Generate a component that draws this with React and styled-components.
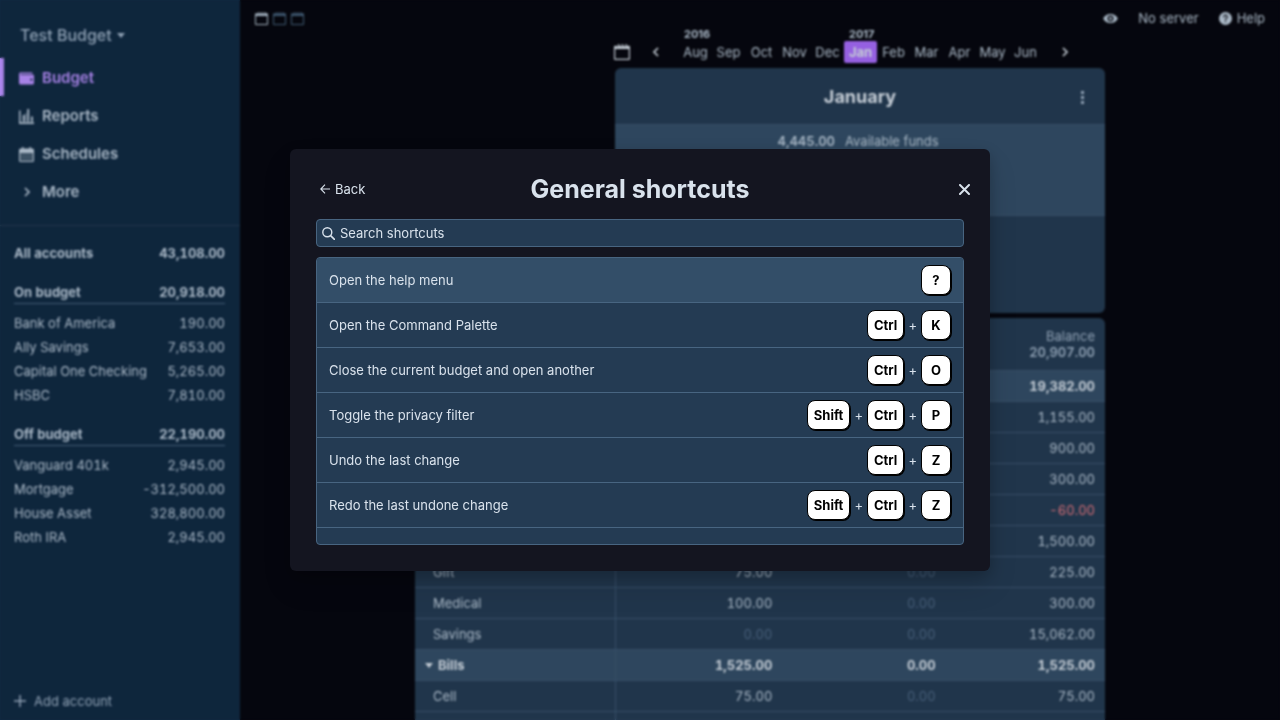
import React from "react";
import styled, { createGlobalStyle, css } from "styled-components";

const color = {
  page: "#06070f",
  sidebar: "#102a43",
  table: "#243b53",
  band: "#334e68",
  line: "#3b5672",
  border: "#486581",
  text: "#d9e2ec",
  soft: "#bcccdc",
  muted: "#9fb3c8",
  faint: "#4f6987",
  purple: "#b990ff",
  chip: "#a66bfa",
  red: "#ee7a84",
  modal: "#141520",
};

const GlobalStyle = createGlobalStyle`
  * { box-sizing: border-box; }
  body {
    margin: 0;
    background: ${color.page};
    color: ${color.text};
    font-family: Inter, "Liberation Sans", sans-serif;
    font-size: 13px;
    line-height: 16px;
  }
  button, input { font: inherit; color: inherit; }
`;

const PlainButton = styled.button`
  display: flex;
  align-items: center;
  gap: ${(p) => p.$gap || 0}px;
  padding: 0;
  border: 0;
  background: none;
  cursor: pointer;
`;

const Svg = styled.svg`
  display: block;
  flex: none;
  width: ${(p) => p.$w}px;
  height: ${(p) => p.$h || p.$w}px;
  fill: currentColor;
`;

/* ---------- icons ---------- */

const WalletIcon = () => (
  <Svg $w={15} viewBox="0 0 20 20" aria-hidden="true">
    <path d="M0 4c0-1.1.9-2 2-2h15a1 1 0 0 1 1 1v1H2v1h17a1 1 0 0 1 1 1v10a2 2 0 0 1-2 2H2a2 2 0 0 1-2-2V4zm16.5 9a1.5 1.5 0 1 0 0-3 1.5 1.5 0 0 0 0 3z" />
  </Svg>
);
const ReportsIcon = () => (
  <Svg $w={15} viewBox="0 0 20 20" aria-hidden="true">
    <path d="M0 2h2v16H0zM5 8h2.500v9H5zM8.500 5.500h1v11h-1zM11 0h2.500v17H11zM16 10h2.500v7H16zM0 17.500h20V20H0z" />
  </Svg>
);
const ScheduleIcon = () => (
  <Svg $w={15} viewBox="0 0 20 20" aria-hidden="true">
    <path opacity=".3" d="M1 7h18v12H1z" />
    <path d="M4 0h2v2h8V0h2v2h2a2 2 0 0 1 2 2v14a2 2 0 0 1-2 2H2a2 2 0 0 1-2-2V4a2 2 0 0 1 2-2h2zM1.500 8v10.500h17V8z" />
  </Svg>
);
const CalendarIcon = ({ size }) => (
  <Svg $w={size} viewBox="0 0 24 24" aria-hidden="true">
    <path d="M22 2.500h-3V1a1 1 0 0 0-2 0v3.500h-1v-2h-2.500V1a1 1 0 0 0-2 0v3.500h-1v-2H8V1a1 1 0 0 0-2 0v3.500H5v-2H2a2 2 0 0 0-2 2V22a2 2 0 0 0 2 2h20a2 2 0 0 0 2-2V4.500a2 2 0 0 0-2-2zM22.200 22.200H1.800V7.500h20.400z" />
  </Svg>
);
const ChevronIcon = ({ left }) => (
  <Svg $w={8} $h={10} viewBox="0 0 8 10" aria-hidden="true">
    <path
      d={left ? "M6 1 2 5l4 4" : "M2 1l4 4-4 4"}
      fill="none"
      stroke="currentColor"
      strokeWidth="1.700"
    />
  </Svg>
);
const CaretIcon = () => (
  <Svg $w={8} $h={5} viewBox="0 0 8 5" aria-hidden="true">
    <path d="M0 0h8L4 5z" />
  </Svg>
);
const PlusIcon = () => (
  <Svg $w={12} viewBox="0 0 12 12" aria-hidden="true">
    <path d="M5.250 0h1.500v5.250H12v1.500H6.750V12h-1.500V6.750H0v-1.500h5.250z" />
  </Svg>
);
const EyeIcon = () => (
  <Svg $w={15} viewBox="0 0 20 20" aria-hidden="true">
    <path d="M.2 10a11 11 0 0 1 19.600 0A11 11 0 0 1 .2 10zm9.800 4a4 4 0 1 0 0-8 4 4 0 0 0 0 8zm0-2a2 2 0 1 1 0-4 2 2 0 0 1 0 4z" />
  </Svg>
);
const HelpIcon = () => (
  <Svg $w={13} viewBox="0 0 24 24" aria-hidden="true">
    <path
      fillRule="evenodd"
      d="M12 0a12 12 0 1 0 0 24 12 12 0 0 0 0-24zm0 19a1.500 1.500 0 1 1 0-3 1.500 1.500 0 0 1 0 3zm1.600-6.100a1 1 0 0 0-.6.900v.200a1 1 0 0 1-2 0v-.2a3 3 0 0 1 1.800-2.700 2.250 2.250 0 1 0-3.050-2.100 1 1 0 0 1-2 0 4.250 4.250 0 1 1 5.850 3.900z"
    />
  </Svg>
);
const DotsIcon = () => (
  <Svg $w={3} $h={13} viewBox="0 0 3 13" aria-hidden="true">
    <path d="M0 0h3v3H0zM0 5h3v3H0zM0 10h3v3H0z" />
  </Svg>
);
const ArrowLeftIcon = () => (
  <Svg $w={10} viewBox="0 0 10 10" aria-hidden="true">
    <path
      d="M5 .7.8 5 5 9.300M.8 5H10"
      fill="none"
      stroke="currentColor"
      strokeWidth="1.100"
    />
  </Svg>
);
const CloseIcon = () => (
  <Svg $w={11} viewBox="0 0 11 11" aria-hidden="true">
    <path d="M1 1l9 9M10 1l-9 9" stroke="currentColor" strokeWidth="2" strokeLinecap="round" />
  </Svg>
);
const SearchIcon = () => (
  <Svg $w={13} viewBox="0 0 13 13" aria-hidden="true">
    <circle cx="5.300" cy="5.300" r="4.500" fill="none" stroke="currentColor" strokeWidth="1.400" />
    <path d="M8.600 8.600l3.900 3.900" stroke="currentColor" strokeWidth="1.600" strokeLinecap="round" />
  </Svg>
);

/* ---------- sidebar ---------- */

const Shell = styled.div`
  display: flex;
  height: 100vh;
  overflow: hidden;
`;

const Sidebar = styled.aside`
  display: flex;
  flex-direction: column;
  flex: none;
  width: 240px;
  background: ${color.sidebar};
`;

const BudgetName = styled(PlainButton)`
  height: 58px;
  padding: 12px 20px 0;
  font-size: 16px;
  font-weight: 500;
  color: ${color.muted};
`;

const NavLink = styled.a`
  display: flex;
  align-items: center;
  gap: 8px;
  height: 38px;
  padding: 2px 0 0 15px;
  border-left: 4px solid transparent;
  font-size: 15px;
  font-weight: 600;
  text-decoration: none;
  color: ${color.soft};
  ${(p) =>
    p.$active &&
    css`
      color: ${color.purple};
      border-left-color: ${color.purple};
    `}
`;

const NavIcon = styled.span`
  display: flex;
  justify-content: center;
  width: 15px;
`;

const Accounts = styled.div`
  display: flex;
  flex-direction: column;
  gap: 15px;
  flex: 1;
  margin-top: 15px;
  padding: 15px 15px 0 14px;
  border-top: 1px solid ${color.table};
`;

const AccountRow = styled.a`
  display: flex;
  align-items: center;
  justify-content: space-between;
  height: 24px;
  color: ${color.soft};
  text-decoration: none;
  font-variant-numeric: tabular-nums;
  ${(p) => p.$strong && css`font-weight: 700;`}
  ${(p) =>
    p.$ruled &&
    css`
      margin-bottom: 7px;
      border-bottom: 1px solid ${color.border};
    `}
`;

const AddAccount = styled(PlainButton)`
  padding: 0 14px 11px;
  color: ${color.muted};
`;

/* ---------- main area ---------- */

const Main = styled.main`
  flex: 1;
  min-width: 0;
`;

const TopBar = styled.header`
  display: flex;
  align-items: center;
  justify-content: space-between;
  height: 36px;
  padding: 0 15px;
`;

const MonthCounts = styled.div`
  display: flex;
  gap: 5px;
`;

const CountButton = styled(PlainButton)`
  color: ${(p) => (p.$on ? color.soft : color.border)};
`;

const TopActions = styled.div`
  display: flex;
  align-items: center;
  gap: 20px;
  color: ${color.soft};
`;

const Budget = styled.div`
  max-width: 690px;
  margin: 0 auto;
`;

const MonthColumn = styled.div`
  margin-left: 200px;
`;

const MonthNav = styled.nav`
  display: flex;
  align-items: flex-end;
  height: 27px;
`;

const NavButton = styled(PlainButton)`
  justify-content: center;
  width: 16px;
  height: 22px;
`;

const TodayButton = styled(NavButton)`
  width: 14px;
  margin-right: 19px;
`;

const Months = styled.div`
  display: flex;
  margin: 0 15px;
`;

const MonthCell = styled.div`
  display: flex;
  flex-direction: column;
  width: 33px;
`;

const Year = styled.span`
  height: 13px;
  padding-left: 5px;
  font-size: 11px;
  line-height: 12px;
  font-weight: 700;
  color: ${color.soft};
`;

const MonthButton = styled.button`
  height: 22px;
  padding: 0;
  border: 0;
  border-radius: 2px;
  background: ${(p) => (p.$active ? color.chip : "none")};
  font-weight: ${(p) => (p.$active ? 700 : 400)};
  color: ${(p) => (p.$active ? color.text : color.soft)};
`;

const Summary = styled.section`
  margin-top: 5px;
  height: 245px;
  border-radius: 6px;
  background: ${color.table};
  overflow: hidden;
`;

const SummaryHead = styled.div`
  display: grid;
  grid-template-columns: 1fr auto 1fr;
  align-items: center;
  height: 56px;
  padding: 2px 21px 0;
`;

const SummaryTitle = styled.h2`
  grid-column: 2;
  margin: 0;
  font-size: 18px;
  line-height: 22px;
  font-weight: 700;
`;

const MoreButton = styled(PlainButton)`
  justify-self: end;
  color: ${color.muted};
`;

const Funds = styled.div`
  display: grid;
  grid-template-columns: 220px 1fr;
  gap: 10px;
  height: 92px;
  padding-top: 8px;
  background: ${color.band};
  border-top: 1px solid ${color.line};
  border-bottom: 1px solid ${color.line};
  color: ${color.soft};
`;

const FundsAmount = styled.strong`
  text-align: right;
  font-weight: 600;
  font-variant-numeric: tabular-nums;
`;

const BudgetTable = styled.table`
  width: 100%;
  margin-top: 5px;
  table-layout: fixed;
  border-collapse: separate;
  border-spacing: 0;
  border-radius: 6px 6px 0 0;
  overflow: hidden;
  background: ${color.table};
  font-variant-numeric: tabular-nums;
`;

const HeadCell = styled.th`
  width: ${(p) => (p.$name ? "200px" : "auto")};
  height: 53px;
  padding: 0 10px 0 6px;
  border-bottom: 1px solid ${color.line};
  text-align: right;
  font-weight: 400;
  color: ${color.muted};
`;

const Total = styled.div`
  font-weight: 600;
`;

const Row = styled.tr`
  height: 31px;
  ${(p) =>
    p.$group &&
    css`
      background: ${color.band};
      font-weight: 700;
    `}
`;

const NameCell = styled.th`
  padding: 0 0 0 ${(p) => (p.$group ? 10 : 18)}px;
  text-align: left;
  font-weight: inherit;
  color: ${(p) => (p.$group ? color.text : color.soft)};
  border-bottom: 1px solid ${color.line};
`;

const GroupName = styled.span`
  display: flex;
  align-items: center;
  gap: 5px;
`;

const AmountCell = styled.td`
  padding: 0 6px 0 0;
  text-align: right;
  border-bottom: 1px solid ${color.line};
  color: ${(p) => color[p.$tone]};
  &:nth-child(2) {
    border-left: 1px solid ${color.line};
  }
  &:last-child {
    padding-right: 10px;
  }
`;

/* ---------- modal ---------- */

const Overlay = styled.div`
  position: fixed;
  inset: 0;
  display: flex;
  align-items: center;
  justify-content: center;
  backdrop-filter: blur(1px) brightness(0.9);
`;

const Modal = styled.section`
  width: 700px;
  max-width: 90%;
  padding: 10px 0 26px;
  border-radius: 6px;
  background: ${color.modal};
  box-shadow: 0 15px 30px rgba(0, 0, 0, 0.11), 0 5px 15px rgba(0, 0, 0, 0.2);
`;

const ModalHead = styled.header`
  display: grid;
  grid-template-columns: 1fr auto 1fr;
  align-items: center;
  height: 60px;
  padding: 0 20px;
`;

const ModalTitle = styled.h1`
  margin: 0;
  font-size: 25px;
  line-height: 30px;
  font-weight: 700;
`;

const BackButton = styled(PlainButton)`
  padding-left: 10px;
`;

const CloseButton = styled(PlainButton)`
  justify-self: end;
`;

const ModalBody = styled.div`
  display: flex;
  flex-direction: column;
  gap: 10px;
  padding: 0 26px;
`;

const SearchBox = styled.label`
  display: flex;
  align-items: center;
  gap: 5px;
  height: 28px;
  padding: 0 5px;
  border: 1px solid ${color.border};
  border-radius: 4px;
  background: ${color.table};
`;

const SearchInput = styled.input`
  flex: 1;
  min-width: 0;
  padding: 0;
  border: 0;
  outline: 0;
  background: none;
  &::placeholder {
    color: ${color.text};
    opacity: 1;
  }
`;

const ShortcutList = styled.ul`
  margin: 0;
  padding: 0 0 16px;
  list-style: none;
  border: 1px solid ${color.border};
  border-radius: 4px;
  background: ${color.table};
  overflow: hidden;
`;

const Shortcut = styled.li`
  display: flex;
  align-items: center;
  justify-content: space-between;
  height: 45px;
  padding: 0 12px;
  border-bottom: 1px solid ${color.border};
  background: ${(p) => (p.$active ? color.band : "none")};
`;

const Keys = styled.span`
  display: flex;
  align-items: center;
  gap: 4px;
`;

const Key = styled.kbd`
  display: flex;
  align-items: center;
  justify-content: center;
  min-width: 30px;
  height: 30px;
  padding: 0 6px;
  border: 1px solid #000;
  border-radius: 8px;
  background: #fff;
  box-shadow: 1px 1px 0 #000;
  color: #000;
  font-family: inherit;
  font-size: 13px;
  font-weight: 700;
`;

/* ---------- data ---------- */

const nav = [
  { label: "Budget", icon: <WalletIcon />, active: true },
  { label: "Reports", icon: <ReportsIcon /> },
  { label: "Schedules", icon: <ScheduleIcon /> },
  { label: "More", icon: <ChevronIcon /> },
];

const accountGroups = [
  {
    name: "On budget",
    total: "20,918.00",
    accounts: [
      ["Bank of America", "190.00"],
      ["Ally Savings", "7,653.00"],
      ["Capital One Checking", "5,265.00"],
      ["HSBC", "7,810.00"],
    ],
  },
  {
    name: "Off budget",
    total: "22,190.00",
    accounts: [
      ["Vanguard 401k", "2,945.00"],
      ["Mortgage", "-312,500.00"],
      ["House Asset", "328,800.00"],
      ["Roth IRA", "2,945.00"],
    ],
  },
];

const months = ["Aug", "Sep", "Oct", "Nov", "Dec", "Jan", "Feb", "Mar", "Apr", "May", "Jun"];
const years = { Aug: "2016", Jan: "2017" };

const rows = [
  { group: true, cells: ["", "", "19,382.00"] },
  { cells: ["", "", "1,155.00"] },
  { cells: ["", "", "900.00"] },
  { cells: ["", "", "300.00"] },
  { cells: ["", "", "-60.00"] },
  { cells: ["", "", "1,500.00"] },
  { name: "Gift", cells: ["75.00", "0.00", "225.00"] },
  { name: "Medical", cells: ["100.00", "0.00", "300.00"] },
  { name: "Savings", cells: ["0.00", "0.00", "15,062.00"] },
  { name: "Bills", group: true, cells: ["1,525.00", "0.00", "1,525.00"] },
  { name: "Cell", cells: ["75.00", "0.00", "75.00"] },
  { cells: ["", "", ""] },
];

const shortcuts = [
  ["Open the help menu", ["?"]],
  ["Open the Command Palette", ["Ctrl", "K"]],
  ["Close the current budget and open another", ["Ctrl", "O"]],
  ["Toggle the privacy filter", ["Shift", "Ctrl", "P"]],
  ["Undo the last change", ["Ctrl", "Z"]],
  ["Redo the last undone change", ["Shift", "Ctrl", "Z"]],
];

const toneOf = (value, group) => {
  if (value.startsWith("-")) return "red";
  if (value === "0.00" && !group) return "faint";
  return group ? "text" : "soft";
};

export default function App() {
  return (
    <>
      <GlobalStyle />
      <Shell>
        <Sidebar>
          <BudgetName $gap={5}>
            Test Budget <CaretIcon />
          </BudgetName>
          <nav>
            {nav.map((item) => (
              <NavLink key={item.label} href="#" $active={item.active}>
                <NavIcon>{item.icon}</NavIcon>
                {item.label}
              </NavLink>
            ))}
          </nav>
          <Accounts>
            <AccountRow href="#" $strong>
              <span>All accounts</span>
              <span>43,108.00</span>
            </AccountRow>
            {accountGroups.map((group) => (
              <div key={group.name}>
                <AccountRow href="#" $strong $ruled>
                  <span>{group.name}</span>
                  <span>{group.total}</span>
                </AccountRow>
                {group.accounts.map(([name, amount]) => (
                  <AccountRow key={name} href="#">
                    <span>{name}</span>
                    <span>{amount}</span>
                  </AccountRow>
                ))}
              </div>
            ))}
          </Accounts>
          <AddAccount $gap={8}>
            <PlusIcon /> Add account
          </AddAccount>
        </Sidebar>

        <Main>
          <TopBar>
            <MonthCounts>
              {[1, 2, 3].map((n) => (
                <CountButton key={n} $on={n === 1} aria-label={`${n} months`}>
                  <CalendarIcon size={13} />
                </CountButton>
              ))}
            </MonthCounts>
            <TopActions>
              <PlainButton aria-label="Privacy filter">
                <EyeIcon />
              </PlainButton>
              <PlainButton>No server</PlainButton>
              <PlainButton $gap={5}>
                <HelpIcon /> Help
              </PlainButton>
            </TopActions>
          </TopBar>

          <Budget>
            <MonthColumn>
              <MonthNav>
                <TodayButton aria-label="Current month">
                  <CalendarIcon size={16} />
                </TodayButton>
                <NavButton aria-label="Previous month">
                  <ChevronIcon left />
                </NavButton>
                <Months>
                  {months.map((month) => (
                    <MonthCell key={month}>
                      <Year>{years[month]}</Year>
                      <MonthButton $active={month === "Jan"}>{month}</MonthButton>
                    </MonthCell>
                  ))}
                </Months>
                <NavButton aria-label="Next month">
                  <ChevronIcon />
                </NavButton>
              </MonthNav>
              <Summary>
                <SummaryHead>
                  <SummaryTitle>January</SummaryTitle>
                  <MoreButton aria-label="Month menu">
                    <DotsIcon />
                  </MoreButton>
                </SummaryHead>
                <Funds>
                  <FundsAmount>4,445.00</FundsAmount>
                  <span>Available funds</span>
                </Funds>
              </Summary>
            </MonthColumn>

            <BudgetTable>
              <thead>
                <tr>
                  <HeadCell $name />
                  <HeadCell />
                  <HeadCell />
                  <HeadCell>
                    Balance
                    <Total>20,907.00</Total>
                  </HeadCell>
                </tr>
              </thead>
              <tbody>
                {rows.map((row, i) => (
                  <Row key={i} $group={row.group}>
                    <NameCell $group={row.group}>
                      {row.group && row.name ? (
                        <GroupName>
                          <CaretIcon />
                          {row.name}
                        </GroupName>
                      ) : (
                        row.name
                      )}
                    </NameCell>
                    {row.cells.map((value, j) => (
                      <AmountCell key={j} $tone={toneOf(value, row.group)}>
                        {value}
                      </AmountCell>
                    ))}
                  </Row>
                ))}
              </tbody>
            </BudgetTable>
          </Budget>
        </Main>
      </Shell>

      <Overlay>
        <Modal role="dialog" aria-labelledby="shortcuts-title">
          <ModalHead>
            <BackButton $gap={5}>
              <ArrowLeftIcon /> Back
            </BackButton>
            <ModalTitle id="shortcuts-title">General shortcuts</ModalTitle>
            <CloseButton aria-label="Close">
              <CloseIcon />
            </CloseButton>
          </ModalHead>
          <ModalBody>
            <SearchBox>
              <SearchIcon />
              <SearchInput type="text" placeholder="Search shortcuts" aria-label="Search shortcuts" />
            </SearchBox>
            <ShortcutList>
              {shortcuts.map(([label, keys], i) => (
                <Shortcut key={label} $active={i === 0}>
                  <span>{label}</span>
                  <Keys>
                    {keys.map((key, k) => (
                      <React.Fragment key={key}>
                        {k > 0 && <span>+</span>}
                        <Key>{key}</Key>
                      </React.Fragment>
                    ))}
                  </Keys>
                </Shortcut>
              ))}
            </ShortcutList>
          </ModalBody>
        </Modal>
      </Overlay>
    </>
  );
}
